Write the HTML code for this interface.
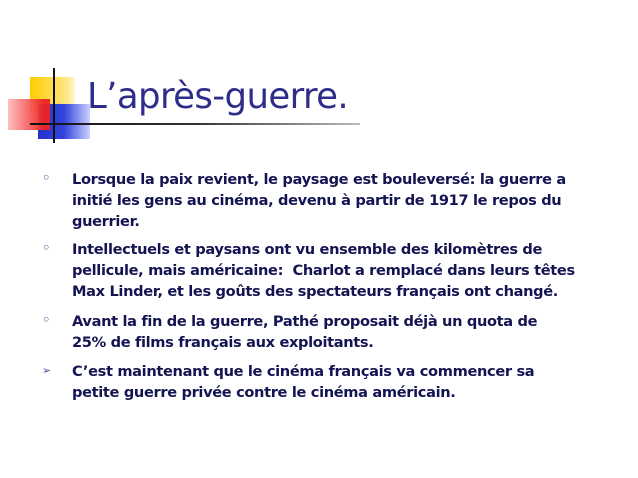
<!DOCTYPE html>
<html><head><meta charset="utf-8"><style>
body{margin:0;width:638px;height:478px;background:#fff;position:relative;overflow:hidden;font-family:"DejaVu Sans","Liberation Sans",sans-serif}
.a{position:absolute}
.t{position:absolute;left:87px;top:76px;font-family:"DejaVu Sans",sans-serif;font-size:35.5px;color:#2e2e8a;letter-spacing:-0.6px;white-space:nowrap}
.l{position:absolute;left:72px;font-weight:bold;font-size:14.6px;color:#141452;white-space:nowrap;letter-spacing:-0.35px}
.b{position:absolute;left:42px;font-size:13px;font-weight:bold;color:#4a4aa0}
</style></head><body>
<div class="a" style="left:30px;top:77px;width:45px;height:36px;background:linear-gradient(90deg,#ffcc00,#ffe680 80%,#fff8d0)"></div>
<div class="a" style="left:38px;top:104px;width:52px;height:35px;background:linear-gradient(90deg,#2233cc,#3344dd 50%,#ccd0ff)"></div>
<div class="a" style="left:8px;top:99px;width:42px;height:31px;background:linear-gradient(90deg,#ffbbbb,#ee2222 85%);opacity:.95"></div>
<div class="a" style="left:53px;top:68px;width:2px;height:75px;background:#111"></div>
<div class="a" style="left:30px;top:123px;width:330px;height:2px;background:linear-gradient(90deg,#111,#333 50%,#bbb)"></div>
<div class="t">L’après-guerre.</div>
<div class="b" style="top:171px">◦</div>
<div class="l" style="top:171px">Lorsque la paix revient, le paysage est bouleversé: la guerre a</div>
<div class="l" style="top:192px">initié les gens au cinéma, devenu à partir de 1917 le repos du</div>
<div class="l" style="top:213px">guerrier.</div>
<div class="b" style="top:241px">◦</div>
<div class="l" style="top:241px">Intellectuels et paysans ont vu ensemble des kilomètres de</div>
<div class="l" style="top:262px">pellicule, mais américaine:&nbsp; Charlot a remplacé dans leurs têtes</div>
<div class="l" style="top:283px">Max Linder, et les goûts des spectateurs français ont changé.</div>
<div class="b" style="top:313px">◦</div>
<div class="l" style="top:313px">Avant la fin de la guerre, Pathé proposait déjà un quota de</div>
<div class="l" style="top:334px">25% de films français aux exploitants.</div>
<div class="b" style="top:364px;font-size:11px">➢</div>
<div class="l" style="top:363px">C’est maintenant que le cinéma français va commencer sa</div>
<div class="l" style="top:384px">petite guerre privée contre le cinéma américain.</div>
</body></html>
